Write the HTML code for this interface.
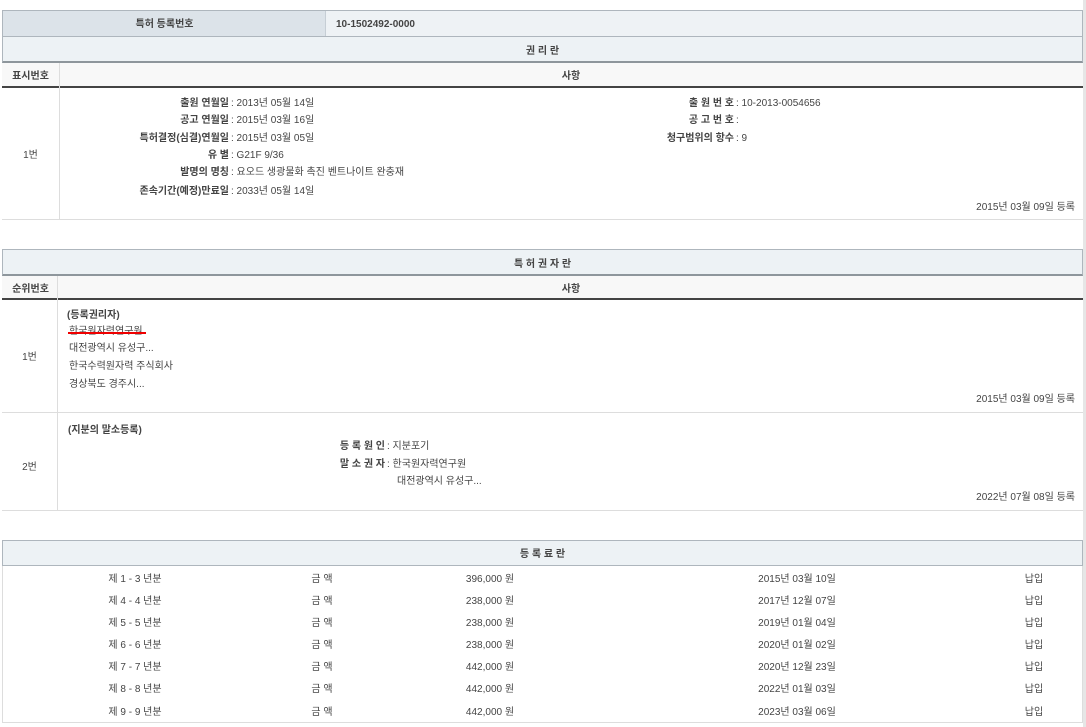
<!DOCTYPE html>
<html><head><meta charset="utf-8">
<style>
*{margin:0;padding:0;box-sizing:border-box}
body{width:1086px;height:727px;background:#fff;position:relative;overflow:hidden;font-family:"Liberation Sans","Noto Sans CJK KR",sans-serif;font-size:10px;color:#444}
.b{position:absolute}
.t{position:absolute;white-space:nowrap;line-height:12px;font-size:10px;margin-top:3px}
.r{text-align:right}
.c{text-align:center}
.bold{font-weight:bold;color:#444}
.hd{background:#edf2f5;border:1px solid #aeb6bd}
.sub{background:#f8f8f8}
</style></head><body>
<div class="b" style="right:0;top:0;width:3px;height:727px;background:#e6e6e6"></div>

<!-- Section 1 -->
<div class="b" style="left:2px;top:10px;width:1081px;height:27px;border:1px solid #aeb6bd;background:#eef2f5"></div>
<div class="b" style="left:3px;top:11px;width:323px;height:25px;background:#dce3e9;border-right:1px solid #c6ced5"></div>
<div class="t c bold" style="left:3px;width:323px;top:16px">특허 등록번호</div>
<div class="t bold" style="left:336px;top:16px">10-1502492-0000</div>
<div class="b hd" style="left:2px;top:36px;width:1081px;height:27px;border-bottom:2px solid #8e969c"></div>
<div class="t c bold" style="left:2px;width:1081px;top:43px">권 리 란</div>
<div class="b sub" style="left:2px;top:63px;width:1081px;height:25px;border-bottom:2px solid #444"></div>
<div class="t c bold" style="left:2px;width:57px;top:68px">표시번호</div>
<div class="t c bold" style="left:59px;width:1024px;top:68px">사항</div>
<div class="b" style="left:59px;top:63px;width:1px;height:157px;background:#ddd"></div>
<div class="b" style="left:2px;top:219px;width:1081px;height:1px;background:#ddd"></div>
<div class="t c" style="left:2px;width:57px;top:147px">1번</div>
<div class="t r bold" style="right:857px;top:95px">출원 연월일</div><div class="t" style="left:231px;top:95px">: 2013년 05월 14일</div>
<div class="t r bold" style="right:857px;top:112px">공고 연월일</div><div class="t" style="left:231px;top:112px">: 2015년 03월 16일</div>
<div class="t r bold" style="right:857px;top:130px">특허결정(심결)연월일</div><div class="t" style="left:231px;top:130px">: 2015년 03월 05일</div>
<div class="t r bold" style="right:857px;top:147px">유 별</div><div class="t" style="left:231px;top:147px">: G21F 9/36</div>
<div class="t r bold" style="right:857px;top:164px">발명의 명칭</div><div class="t" style="left:231px;top:164px">: 요오드 생광물화 촉진 벤트나이트 완충재</div>
<div class="t r bold" style="right:857px;top:183px">존속기간(예정)만료일</div><div class="t" style="left:231px;top:183px">: 2033년 05월 14일</div>
<div class="t r bold" style="right:352px;top:95px">출 원 번 호</div><div class="t" style="left:736px;top:95px">: 10-2013-0054656</div>
<div class="t r bold" style="right:352px;top:112px">공 고 번 호</div><div class="t" style="left:736px;top:112px">:</div>
<div class="t r bold" style="right:352px;top:130px">청구범위의 항수</div><div class="t" style="left:736px;top:130px">: 9</div>
<div class="t r" style="right:11px;top:199px">2015년 03월 09일 등록</div>

<!-- Section 2 -->
<div class="b hd" style="left:2px;top:249px;width:1081px;height:27px;border-bottom:2px solid #8e969c"></div>
<div class="t c bold" style="left:2px;width:1081px;top:256px">특 허 권 자 란</div>
<div class="b sub" style="left:2px;top:276px;width:1081px;height:24px;border-bottom:2px solid #444"></div>
<div class="t c bold" style="left:2px;width:57px;top:281px">순위번호</div>
<div class="t c bold" style="left:59px;width:1024px;top:281px">사항</div>
<div class="b" style="left:57px;top:276px;width:1px;height:235px;background:#ddd"></div>
<div class="b" style="left:2px;top:412px;width:1081px;height:1px;background:#ddd"></div>
<div class="b" style="left:2px;top:510px;width:1081px;height:1px;background:#ddd"></div>
<div class="t c" style="left:2px;width:55px;top:349px">1번</div>
<div class="t bold" style="left:67px;top:307px">(등록권리자)</div>
<div class="t" style="left:69px;top:323px">한국원자력연구원</div>
<div class="b" style="left:68px;top:332px;width:78px;height:2px;background:#e00"></div>
<div class="t" style="left:69px;top:340px">대전광역시 유성구...</div>
<div class="t" style="left:69px;top:358px">한국수력원자력 주식회사</div>
<div class="t" style="left:69px;top:376px">경상북도 경주시...</div>
<div class="t r" style="right:11px;top:391px">2015년 03월 09일 등록</div>
<div class="t c" style="left:2px;width:55px;top:459px">2번</div>
<div class="t bold" style="left:68px;top:422px">(지분의 말소등록)</div>
<div class="t r bold" style="right:701px;top:438px">등 록 원 인</div><div class="t" style="left:387px;top:438px">: 지분포기</div>
<div class="t r bold" style="right:701px;top:456px">말 소 권 자</div><div class="t" style="left:387px;top:456px">: 한국원자력연구원</div>
<div class="t" style="left:397px;top:473px">대전광역시 유성구...</div>
<div class="t r" style="right:11px;top:489px">2022년 07월 08일 등록</div>

<!-- Section 3 -->
<div class="b hd" style="left:2px;top:540px;width:1081px;height:26px"></div>
<div class="t c bold" style="left:2px;width:1081px;top:546px">등 록 료 란</div>
<div class="b" style="left:2px;top:566px;width:1081px;height:157px;border:1px solid #ddd;border-top:none"></div>
<div class="t c" style="left:75px;width:120px;top:571px">제 1 - 3 년분</div><div class="t c" style="left:292px;width:60px;top:571px">금 액</div><div class="t c" style="left:440px;width:100px;top:571px">396,000 원</div><div class="t c" style="left:737px;width:120px;top:571px">2015년 03월 10일</div><div class="t c" style="left:1014px;width:40px;top:571px">납입</div>
<div class="t c" style="left:75px;width:120px;top:593px">제 4 - 4 년분</div><div class="t c" style="left:292px;width:60px;top:593px">금 액</div><div class="t c" style="left:440px;width:100px;top:593px">238,000 원</div><div class="t c" style="left:737px;width:120px;top:593px">2017년 12월 07일</div><div class="t c" style="left:1014px;width:40px;top:593px">납입</div>
<div class="t c" style="left:75px;width:120px;top:615px">제 5 - 5 년분</div><div class="t c" style="left:292px;width:60px;top:615px">금 액</div><div class="t c" style="left:440px;width:100px;top:615px">238,000 원</div><div class="t c" style="left:737px;width:120px;top:615px">2019년 01월 04일</div><div class="t c" style="left:1014px;width:40px;top:615px">납입</div>
<div class="t c" style="left:75px;width:120px;top:637px">제 6 - 6 년분</div><div class="t c" style="left:292px;width:60px;top:637px">금 액</div><div class="t c" style="left:440px;width:100px;top:637px">238,000 원</div><div class="t c" style="left:737px;width:120px;top:637px">2020년 01월 02일</div><div class="t c" style="left:1014px;width:40px;top:637px">납입</div>
<div class="t c" style="left:75px;width:120px;top:659px">제 7 - 7 년분</div><div class="t c" style="left:292px;width:60px;top:659px">금 액</div><div class="t c" style="left:440px;width:100px;top:659px">442,000 원</div><div class="t c" style="left:737px;width:120px;top:659px">2020년 12월 23일</div><div class="t c" style="left:1014px;width:40px;top:659px">납입</div>
<div class="t c" style="left:75px;width:120px;top:681px">제 8 - 8 년분</div><div class="t c" style="left:292px;width:60px;top:681px">금 액</div><div class="t c" style="left:440px;width:100px;top:681px">442,000 원</div><div class="t c" style="left:737px;width:120px;top:681px">2022년 01월 03일</div><div class="t c" style="left:1014px;width:40px;top:681px">납입</div>
<div class="t c" style="left:75px;width:120px;top:704px">제 9 - 9 년분</div><div class="t c" style="left:292px;width:60px;top:704px">금 액</div><div class="t c" style="left:440px;width:100px;top:704px">442,000 원</div><div class="t c" style="left:737px;width:120px;top:704px">2023년 03월 06일</div><div class="t c" style="left:1014px;width:40px;top:704px">납입</div>
</body></html>
